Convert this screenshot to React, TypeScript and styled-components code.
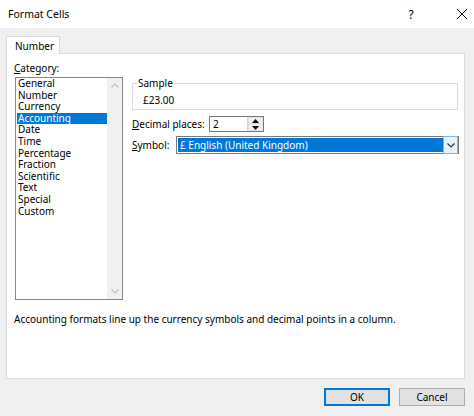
import React from 'react';
import styled, { createGlobalStyle } from 'styled-components';

const GlobalStyle = createGlobalStyle`
  html, body {
    margin: 0;
    padding: 0;
    background: #f0f0f0;
  }
  body {
    font-family: "Noto Sans", "DejaVu Sans", sans-serif;
    font-size: 10px;
    color: #000;
  }
`;

const CATEGORIES = [
  'General',
  'Number',
  'Currency',
  'Accounting',
  'Date',
  'Time',
  'Percentage',
  'Fraction',
  'Scientific',
  'Text',
  'Special',
  'Custom'
];

const Chevron = ({ up = false }: { up?: boolean }) => (
  <svg width="8" height="5" viewBox="0 0 8 5">
    <path
      d={up ? 'M0.5 4.5 L4 1 L7.5 4.5' : 'M0.5 0.5 L4 4 L7.5 0.5'}
      fill="none"
      stroke="currentColor"
      strokeWidth="1.2"
    />
  </svg>
);

const Triangle = ({ up = false }: { up?: boolean }) => (
  <svg width="7" height="4" viewBox="0 0 7 4">
    <path d={up ? 'M0 4 L3.5 0 L7 4 Z' : 'M0 0 L3.5 4 L7 0 Z'} fill="#000" />
  </svg>
);

const App: React.FC = () => {
  return (
    <Window>
      <GlobalStyle />
      <TitleBar>
        <Title>Format Cells</Title>
        <HelpButton>?</HelpButton>
        <CloseButton>
          <svg width="12" height="12" viewBox="0 0 12 12">
            <path d="M1 1 L11 11 M11 1 L1 11" stroke="#000" strokeWidth="1" />
          </svg>
        </CloseButton>
      </TitleBar>
      <Body>
        <TabStrip>
          <Tab>Number</Tab>
        </TabStrip>
        <Panel>
          <Columns>
            <LeftColumn>
              <FieldLabel>
                <u>C</u>ategory:
              </FieldLabel>
              <ListBox>
                <ListItems>
                  {CATEGORIES.map((name) => (
                    <ListItem key={name} selected={name === 'Accounting'}>
                      {name}
                    </ListItem>
                  ))}
                </ListItems>
                <ScrollBar>
                  <ScrollArrow>
                    <Chevron up />
                  </ScrollArrow>
                  <ScrollArrow>
                    <Chevron />
                  </ScrollArrow>
                </ScrollBar>
              </ListBox>
            </LeftColumn>
            <RightColumn>
              <SampleGroup>
                <legend>Sample</legend>
                <SampleValue>£23.00</SampleValue>
              </SampleGroup>
              <DecimalRow>
                <RowLabel width={77}>
                  <u>D</u>ecimal places:
                </RowLabel>
                <Spinner>
                  <SpinInput>2</SpinInput>
                  <SpinButtons>
                    <SpinButton>
                      <Triangle up />
                    </SpinButton>
                    <SpinButton>
                      <Triangle />
                    </SpinButton>
                  </SpinButtons>
                </Spinner>
              </DecimalRow>
              <SymbolRow>
                <RowLabel width={44}>
                  <u>S</u>ymbol:
                </RowLabel>
                <Select>
                  <SelectValue>£ English (United Kingdom)</SelectValue>
                  <SelectArrow>
                    <Chevron />
                  </SelectArrow>
                </Select>
              </SymbolRow>
            </RightColumn>
          </Columns>
          <Description>
            Accounting formats line up the currency symbols and decimal points in a column.
          </Description>
        </Panel>
        <Footer>
          <DialogButton primary>OK</DialogButton>
          <DialogButton>Cancel</DialogButton>
        </Footer>
      </Body>
    </Window>
  );
};

export default App;

const Window = styled.div`
  width: 474px;
  height: 416px;
  display: flex;
  flex-direction: column;
  background: #f0f0f0;
  overflow: hidden;
`;

const TitleBar = styled.div`
  height: 28px;
  flex: 0 0 28px;
  background: #fff;
  display: flex;
  align-items: center;
  justify-content: flex-end;
  padding: 0 6px 0 8px;
`;

const Title = styled.div`
  flex: 1;
  font-size: 10.5px;
  margin-top: -1px;
`;

const HelpButton = styled.div`
  width: 20px;
  text-align: center;
  font-size: 12px;
`;

const CloseButton = styled.div`
  width: 12px;
  height: 12px;
  display: flex;
  margin-left: 35px;
`;

const Body = styled.div`
  flex: 1;
  display: flex;
  flex-direction: column;
  padding: 8px 9px 0 6px;
`;

const TabStrip = styled.div`
  display: flex;
  height: 17px;
`;

const Tab = styled.div`
  width: 54px;
  height: 18px;
  box-sizing: border-box;
  border: 1px solid #d9d9d9;
  border-bottom: 0;
  background: #fff;
  padding: 2px 0 0 8px;
  position: relative;
  z-index: 1;
`;

const Panel = styled.div`
  height: 326px;
  box-sizing: border-box;
  border: 1px solid #d9d9d9;
  background: #fff;
  padding: 7px 0 0 7px;
  display: flex;
  flex-direction: column;
`;

const Columns = styled.div`
  display: flex;
`;

const LeftColumn = styled.div`
  display: flex;
  flex-direction: column;
  width: 118px;
`;

const FieldLabel = styled.div`
  height: 15px;
  line-height: 15px;
  margin-bottom: 1px;
`;

const ListBox = styled.div`
  margin-left: 1px;
  width: 108px;
  height: 223px;
  box-sizing: border-box;
  border: 1px solid #828790;
  display: flex;
`;

const ListItems = styled.div`
  flex: 1;
  padding: 0 0 0 1px;
`;

const ListItem = styled.div<{ selected?: boolean }>`
  height: 11.6px;
  line-height: 11.6px;
  padding-left: 1px;
  background: ${({ selected }) => (selected ? '#0078d7' : 'transparent')};
  color: ${({ selected }) => (selected ? '#fff' : '#000')};
`;

const ScrollBar = styled.div`
  width: 15px;
  background: #f0f0f0;
  display: flex;
  flex-direction: column;
  justify-content: space-between;
`;

const ScrollArrow = styled.div`
  height: 15px;
  display: flex;
  align-items: center;
  justify-content: center;
  color: #c2c2c2;
`;

const RightColumn = styled.div`
  display: flex;
  flex-direction: column;
  margin-top: 15px;
`;

const SampleGroup = styled.fieldset`
  width: 326px;
  height: 34px;
  box-sizing: border-box;
  margin: 0;
  padding: 0 0 0 10px;
  border: 1px solid #dcdcdc;

  legend {
    padding: 0 1px;
    margin-left: -6px;
    line-height: 14px;
  }
`;

const SampleValue = styled.div`
  margin-top: 3px;
  line-height: 14px;
`;

const DecimalRow = styled.div`
  display: flex;
  align-items: center;
  margin-top: 6px;
`;

const SymbolRow = styled.div`
  display: flex;
  align-items: center;
  margin-top: 4px;
`;

const RowLabel = styled.div<{ width: number }>`
  width: ${({ width }) => width}px;
`;

const Spinner = styled.div`
  display: flex;
  height: 16px;
  box-sizing: border-box;
  border: 1px solid #7a7a7a;
`;

const SpinInput = styled.div`
  width: 37px;
  padding-left: 3px;
  line-height: 14px;
  box-sizing: border-box;
`;

const SpinButtons = styled.div`
  width: 15px;
  display: flex;
  flex-direction: column;
  border-left: 1px solid #d9d9d9;
`;

const SpinButton = styled.div`
  flex: 1;
  display: flex;
  align-items: center;
  justify-content: center;
  background: #f0f0f0;
  border: 1px solid #e3e3e3;
`;

const Select = styled.div`
  display: flex;
  width: 283px;
  height: 18px;
  box-sizing: border-box;
  border: 1px solid #7a7a7a;
  padding: 1px 0 1px 1px;
`;

const SelectValue = styled.div`
  flex: 1;
  background: #0078d7;
  color: #fff;
  padding-left: 2px;
  line-height: 14px;
`;

const SelectArrow = styled.div`
  width: 15px;
  margin-top: -2px;
  margin-bottom: -2px;
  box-sizing: border-box;
  border: 1px solid #7eb4ea;
  background: #e5f1fb;
  display: flex;
  align-items: center;
  justify-content: center;
  color: #333;
`;

const Description = styled.div`
  margin-top: 12px;
  line-height: 14px;
`;

const Footer = styled.div`
  display: flex;
  justify-content: flex-end;
  gap: 9px;
  padding-top: 9px;
`;

const DialogButton = styled.div<{ primary?: boolean }>`
  width: 66px;
  height: 18px;
  box-sizing: border-box;
  display: flex;
  align-items: center;
  justify-content: center;
  background: #e1e1e1;
  border: 1px solid ${({ primary }) => (primary ? '#0078d7' : '#adadad')};
  box-shadow: ${({ primary }) => (primary ? 'inset 0 0 0 1px #0078d7' : 'none')};
`;
